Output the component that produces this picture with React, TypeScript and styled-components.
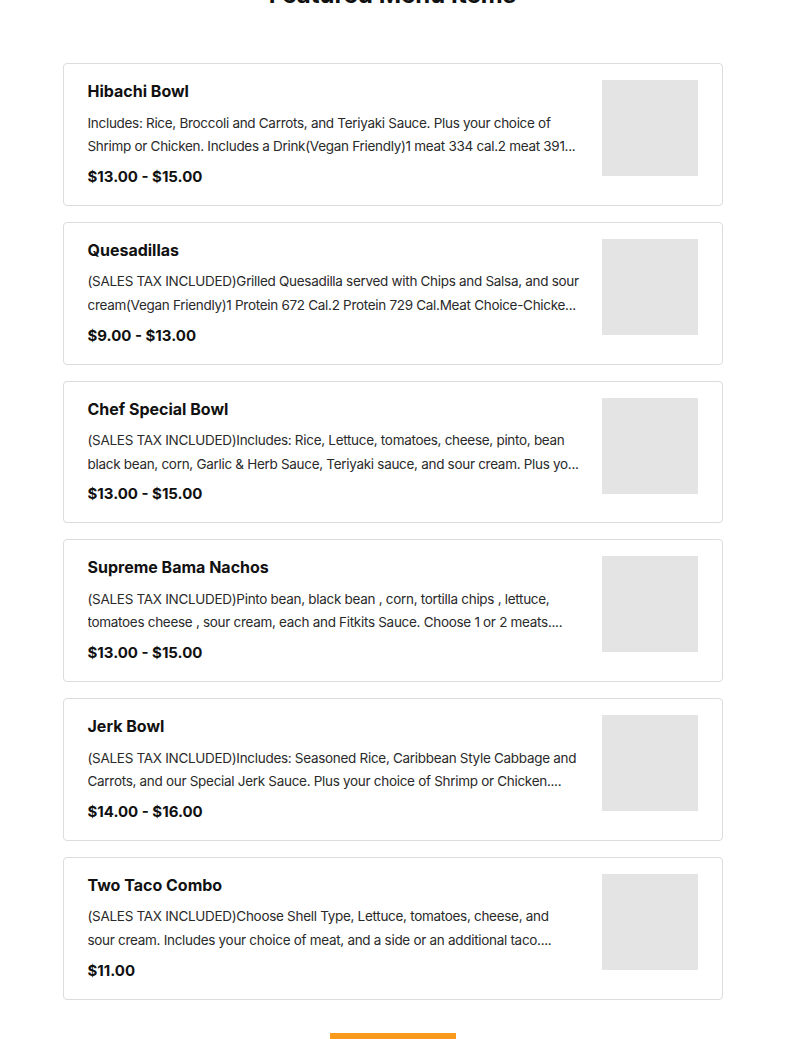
import React from "react";
import styled, { createGlobalStyle } from "styled-components";

const GlobalStyle = createGlobalStyle`
  html, body { margin: 0; padding: 0; background: #ffffff; }
  body { font-family: Inter, "Noto Sans", Arial, sans-serif; color: #1a1a1a; overflow: hidden; }
`;

const Page = styled.main`
  display: flex;
  flex-direction: column;
  align-items: center;
`;

const Heading = styled.h2`
  margin: -21px 0 0;
  font-size: 24px;
  line-height: 32px;
  font-weight: 700;
  color: #111;
  text-align: center;
`;

const List = styled.section`
  width: 660px;
  margin-top: 52px;
  display: flex;
  flex-direction: column;
  gap: 16px;
`;

const Card = styled.article`
  display: flex;
  gap: 16px;
  padding: 16px 24px;
  border: 1px solid #dcdcdc;
  border-radius: 4px;
  background: #fff;
`;

const Body = styled.div`
  flex: 1;
  min-width: 0;
  display: flex;
  flex-direction: column;
`;

const Title = styled.h3`
  margin: 0 0 9.5px;
  font-size: 16px;
  line-height: 22px;
  font-weight: 700;
  color: #111;
`;

const Desc = styled.p`
  margin: 0;
  font-size: 13.5px;
  line-height: 23.5px;
  letter-spacing: -0.3px;
  color: #2a2a2a;
`;

const Line = styled.span`
  display: block;
  white-space: nowrap;
  overflow: hidden;
  text-overflow: ellipsis;
`;

const Price = styled.div`
  margin-top: 6.3px;
  font-size: 15px;
  line-height: 24px;
  font-weight: 700;
  color: #111;
`;

const Thumb = styled.div`
  flex: none;
  width: 96px;
  height: 96px;
  background: #e4e4e4;
`;

const MenuButton = styled.button`
  margin-top: 33px;
  width: 126px;
  height: 44px;
  border: none;
  border-radius: 0;
  background: #f99a1c;
  color: #fff;
  font-family: inherit;
  font-weight: 700;
  font-size: 14px;
  display: flex;
  align-items: flex-end;
  justify-content: center;
  padding: 0 0 8px;
`;

type Item = { title: string; lines: [string, string]; price: string };

const items: Item[] = [
  {
    title: "Hibachi Bowl",
    lines: [
      "Includes: Rice, Broccoli and Carrots, and Teriyaki Sauce. Plus your choice of",
      "Shrimp or Chicken. Includes a Drink(Vegan Friendly)1 meat 334 cal.2 meat 391...",
    ],
    price: "$13.00 - $15.00",
  },
  {
    title: "Quesadillas",
    lines: [
      "(SALES TAX INCLUDED)Grilled Quesadilla served with Chips and Salsa, and sour",
      "cream(Vegan Friendly)1 Protein 672 Cal.2 Protein 729 Cal.Meat Choice-Chicke...",
    ],
    price: "$9.00 - $13.00",
  },
  {
    title: "Chef Special Bowl",
    lines: [
      "(SALES TAX INCLUDED)Includes: Rice, Lettuce, tomatoes, cheese, pinto, bean",
      "black bean, corn, Garlic & Herb Sauce, Teriyaki sauce, and sour cream. Plus yo...",
    ],
    price: "$13.00 - $15.00",
  },
  {
    title: "Supreme Bama Nachos",
    lines: [
      "(SALES TAX INCLUDED)Pinto bean, black bean , corn, tortilla chips , lettuce,",
      "tomatoes cheese , sour cream, each and Fitkits Sauce. Choose 1 or 2 meats....",
    ],
    price: "$13.00 - $15.00",
  },
  {
    title: "Jerk Bowl",
    lines: [
      "(SALES TAX INCLUDED)Includes: Seasoned Rice, Caribbean Style Cabbage and",
      "Carrots, and our Special Jerk Sauce. Plus your choice of Shrimp or Chicken....",
    ],
    price: "$14.00 - $16.00",
  },
  {
    title: "Two Taco Combo",
    lines: [
      "(SALES TAX INCLUDED)Choose Shell Type, Lettuce, tomatoes, cheese, and",
      "sour cream. Includes your choice of meat, and a side or an additional taco....",
    ],
    price: "$11.00",
  },
];

export default function App() {
  return (
    <>
      <GlobalStyle />
      <Page>
        <Heading>Featured Menu Items</Heading>
        <List>
          {items.map((it) => (
            <Card key={it.title}>
              <Body>
                <Title>{it.title}</Title>
                <Desc>
                  <Line>{it.lines[0]}</Line>
                  <Line>{it.lines[1]}</Line>
                </Desc>
                <Price>{it.price}</Price>
              </Body>
              <Thumb />
            </Card>
          ))}
        </List>
        <MenuButton>View Full Menu</MenuButton>
      </Page>
    </>
  );
}
